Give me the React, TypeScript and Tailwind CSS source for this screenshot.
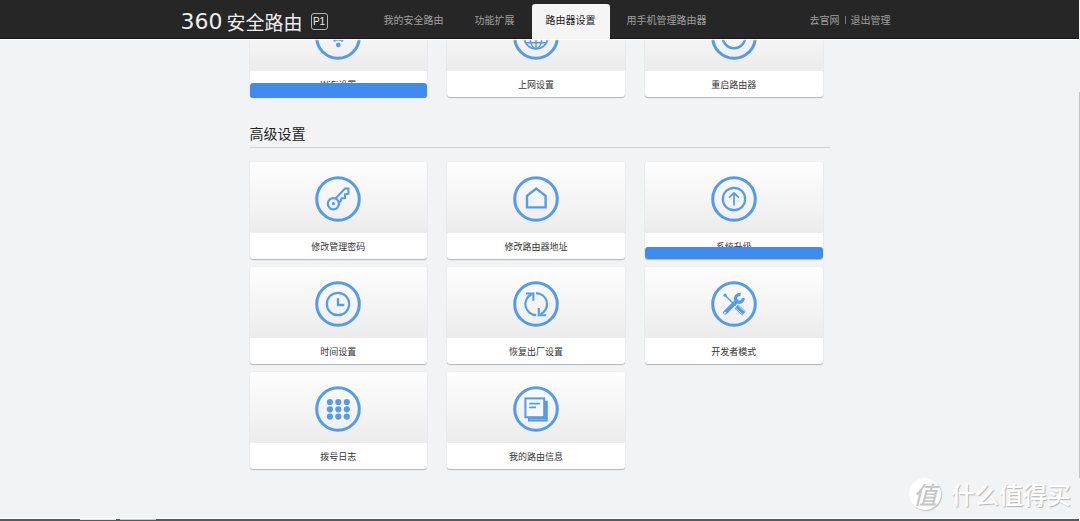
import React from "react";

type Tile = { label: string; icon: React.ReactNode; bar?: "tall" | "short" };

function Ring({ children }: { children: React.ReactNode }) {
  return (
    <svg viewBox="0 0 46 46" className="size-[46px] shrink-0" fill="none" stroke="#559be8" strokeWidth="2.2" aria-hidden="true">
      <circle cx="23" cy="23" r="21.3" strokeWidth="3" />
      {children}
    </svg>
  );
}

const wifi = (
  <>
    <circle cx="23.3" cy="30.9" r="2.3" fill="#559be8" stroke="none" />
    <path d="M18.6 27Q23.3 23.2 28 27M15.5 22.6Q23.3 16.1 31 22.6M12.5 18.4Q23.3 9.4 34 18.4" strokeWidth="2.6" />
  </>
);

const globe = (
  <>
    <circle cx="23" cy="23" r="11.8" strokeWidth="1.8" />
    <ellipse cx="23" cy="23" rx="6" ry="11.6" strokeWidth="1.4" />
    <path d="M23 11.4V34.6M11.4 23H34.6M13 17.2H33M13 28.8H33" strokeWidth="1.4" />
  </>
);

const restart = (
  <>
    <path d="M17 13.6A11.2 11.2 0 1 0 29 13.6" strokeWidth="2.4" />
    <path d="M23 10V20" strokeWidth="2.4" />
  </>
);

const keyIcon = (
  <>
    <circle cx="18.4" cy="27.7" r="5.6" />
    <circle cx="18.4" cy="27.7" r="1.6" fill="#559be8" stroke="none" />
    <path d="M20.6 22.4L30 12.5H33.4V17.7L30 18.4V22L26.3 22.4L25.6 25.4L23.4 26.2" strokeWidth="2" />
  </>
);

const home = <path d="M23.3 12.6L32.6 19.8V31.4H14V19.8Z" strokeWidth="2.4" />;

const upgrade = (
  <>
    <circle cx="23" cy="23" r="11.2" />
    <path d="M23 29.4V17.2M18 21.6L23 17L28 21.6" strokeWidth="1.7" />
  </>
);

const clock = (
  <>
    <circle cx="23" cy="23" r="11.2" />
    <path d="M23 17.2V24H29.2" strokeWidth="2.3" />
  </>
);

const restore = (
  <>
    <path d="M18.6 13.2A11 11 0 0 0 23.2 34.1M23 12.1A11 11 0 0 1 27.6 33.1" strokeWidth="2.1" />
    <path d="M13 12.5H20.4V19.8M25.8 27V34.2H33.2" strokeWidth="2.1" />
  </>
);

const tools = (
  <>
    <circle cx="14" cy="14.2" r="1.6" fill="#559be8" stroke="none" />
    <path d="M14 14.2L24.6 24.8" strokeWidth="1.4" />
    <path d="M25.4 25.6L33 32.4" strokeWidth="5.4" />
    <path d="M24.4 26.8L31.6 33.4M27 24.4L34.2 31" stroke="#c9def5" strokeWidth="0.9" />
    <path d="M14.2 31.6L25.6 20.2" strokeWidth="4.2" strokeLinecap="round" />
    <circle cx="14" cy="31.8" r="1" fill="#f2f2f2" stroke="none" />
    <path d="M29.6 13.8A3.9 3.9 0 1 0 32.2 17.2" strokeWidth="3.2" />
  </>
);

const dots = (
  <g fill="#559be8" stroke="none">
    {[14.9, 23.3, 31.8].map((x) =>
      [16, 23.3, 30.6].map((y) => <circle key={`${x}-${y}`} cx={x} cy={y} r="3.1" />)
    )}
  </g>
);

const documents = (
  <>
    <path d="M32.4 15.6H34V34.6H15.8V32.4H32.4Z" fill="#a9ccf3" strokeWidth="1.6" />
    <rect x="12.4" y="12.4" width="18.8" height="18.8" fill="#f7f7f7" strokeWidth="2" />
    <path d="M16.2 17.7H27M16.2 21.4H23" strokeWidth="1.8" />
  </>
);

const basic: Tile[] = [
  { label: "WiFi设置", icon: wifi, bar: "tall" },
  { label: "上网设置", icon: globe },
  { label: "重启路由器", icon: restart },
];

const advanced: Tile[] = [
  { label: "修改管理密码", icon: keyIcon },
  { label: "修改路由器地址", icon: home },
  { label: "系统升级", icon: upgrade, bar: "short" },
  { label: "时间设置", icon: clock },
  { label: "恢复出厂设置", icon: restore },
  { label: "开发者模式", icon: tools },
  { label: "拨号日志", icon: dots },
  { label: "我的路由信息", icon: documents },
];

const nav = ["我的安全路由", "功能扩展", "路由器设置", "用手机管理路由器"];

function TileGrid({ tiles }: { tiles: Tile[] }) {
  return (
    <div className="grid grid-cols-3 gap-x-5 gap-y-2 pr-[7px]">
      {tiles.map((t) => (
        <a
          key={t.label}
          href="#"
          className="relative flex flex-col rounded-[3px] bg-white shadow-[0_1px_1px_rgba(0,0,0,0.25),0_0_2px_rgba(0,0,0,0.06)]"
        >
          <span className="flex h-[71px] items-center justify-center rounded-t-[3px] bg-linear-to-b from-[#fefefe] to-[#ececec] pt-[2px]">
            <Ring>{t.icon}</Ring>
          </span>
          <span className="flex h-[26px] items-center justify-center text-[9px] leading-none text-[#333]">{t.label}</span>
          {t.bar === "tall" && <span className="absolute inset-x-0 -bottom-px h-[15px] rounded-[3px] bg-[#428bee]" />}
          {t.bar === "short" && <span className="absolute inset-x-0 bottom-0 h-3 rounded-[3px] bg-[#428bee]" />}
        </a>
      ))}
    </div>
  );
}

export default function App() {
  return (
    <div
      lang="zh-CN"
      className="relative flex min-h-screen flex-col bg-[#f2f3f5] pr-px font-['Noto_Sans_CJK_SC',sans-serif]"
    >
      <header className="sticky top-0 z-10 h-[39px] border-b border-[#151515] bg-[#262626] shadow-[0_1px_1px_rgba(255,255,255,0.9)]">
        <div className="mx-auto flex h-[39px] max-w-[718px] items-end pr-2 text-[10px] leading-none text-[#a0a0a0]">
          <a href="#" className="flex h-[35px] items-center gap-2 text-[#ededed]">
            <span className="flex items-center gap-1 whitespace-nowrap">
              <span className="font-['DejaVu_Sans'] text-[22px] leading-none">360</span>
              <span className="text-[19px] leading-none">安全路由</span>
            </span>
            <span className="flex size-[17px] items-center justify-center rounded-[3px] border border-[#b5b5b5] font-['Liberation_Sans'] text-[10px] leading-none">
              P1
            </span>
          </a>
          <nav className="ml-auto flex gap-[3px]">
            {nav.map((n) => (
              <a
                key={n}
                href="#"
                className={
                  n === "路由器设置"
                    ? "flex h-[35px] items-center rounded-t-[3px] bg-[#f5f5f5] px-3.5 pb-[3px] whitespace-nowrap text-[#222]"
                    : "flex h-[35px] items-center px-3.5 pb-[3px] whitespace-nowrap"
                }
              >
                {n}
              </a>
            ))}
          </nav>
          <div className="ml-[89px] flex h-[35px] items-center gap-[5px] pb-[3px] whitespace-nowrap">
            <a href="#">去官网</a>
            <span className="h-2 w-px bg-[#777]" />
            <a href="#">退出管理</a>
          </div>
        </div>
      </header>

      <main className="mx-auto -mt-[39px] w-full max-w-[580px]">
        <TileGrid tiles={basic} />
        <h2 className="mb-3.5 border-b border-[#d3d4d6] pt-[27px] pb-[5px] text-[14px] leading-[18px] text-[#222]">
          高级设置
        </h2>
        <TileGrid tiles={advanced} />
      </main>

      <footer className="mt-auto flex h-[3px] border-t border-white bg-[#525a68] pl-20">
        <span className="h-px w-9 bg-[#e4e6ea]" />
        <span className="ml-1 h-px w-9 bg-[#c3c7ce]" />
      </footer>

      <div className="absolute right-[9px] bottom-[11px] flex items-center gap-[10px] text-white">
        <span className="flex size-8 items-center justify-center rounded-full bg-white text-[24px] leading-none font-medium text-[#c6c7c9] italic shadow-[1px_1px_1px_#c0c1c3]">
          值
        </span>
        <span className="text-[24px] leading-none font-medium [text-shadow:1px_1px_1px_#b4b5b7]">什么值得买</span>
      </div>
      <span className="absolute top-[92px] right-0 bottom-[43px] w-px bg-[#c4c4c6]" />
    </div>
  );
}
